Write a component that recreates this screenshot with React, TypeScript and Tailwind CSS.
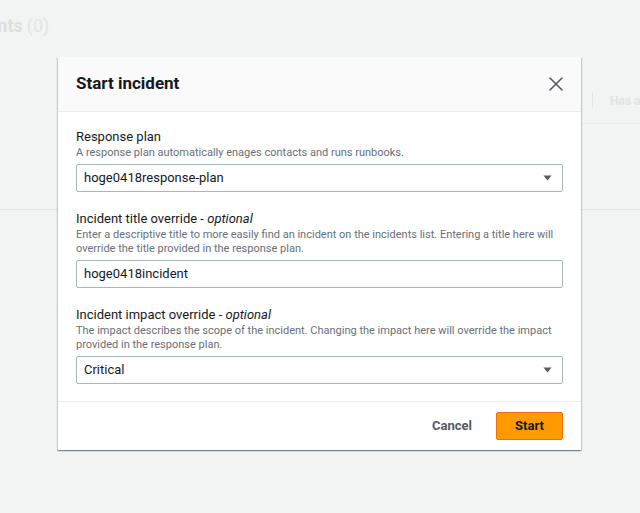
import { X } from 'lucide-react';

const font = { fontFamily: 'Roboto, "Liberation Sans", sans-serif' };

function Caret() {
  return (
    <svg width="9" height="6" viewBox="0 0 9 6" className="shrink-0">
      <path d="M0.5 0.5h8L4.5 5.5z" fill="#545b64" />
    </svg>
  );
}

function Field({
  label,
  optional,
  description,
  children,
}: {
  label: string;
  optional?: boolean;
  description: string[];
  children: React.ReactNode;
}) {
  return (
    <div className="flex flex-col">
      <div className="text-[13px] leading-[16px] text-[#16191f]">
        {label}
        {optional && (
          <>
            {' - '}
            <i>optional</i>
          </>
        )}
      </div>
      <div className="mt-[1px] text-[11px] leading-[14.5px] text-[#687078]">
        {description.map((line) => (
          <div key={line}>{line}</div>
        ))}
      </div>
      <div className="mt-[3px]">{children}</div>
    </div>
  );
}

function SelectBox({ value }: { value: string }) {
  return (
    <div className="flex h-[28px] items-center justify-between rounded-[2px] border border-[#aab7b8] bg-white pl-[7px] pr-[10px] text-[13px] text-[#16191f]">
      <span>{value}</span>
      <Caret />
    </div>
  );
}

export default function App() {
  return (
    <div className="relative h-[513px] w-[640px] overflow-hidden bg-[#f2f3f3]" style={font}>
      {/* page behind the overlay */}
      <div className="flex flex-col">
        <div className="flex h-[50px] items-center overflow-hidden">
          <span className="-ml-[52px] text-[18px] font-bold text-[#dcdfdf]">Incidents</span>
          <span className="ml-[4px] text-[18px] text-[#e3e5e5]">(0)</span>
        </div>
        <div className="flex h-[74px] justify-end">
          <div className="flex w-[120px] items-center border-b border-[#e6e8e8] pt-[28px]">
            <div className="ml-[72px] h-[17px] w-px shrink-0 bg-[#e3e5e5]" />
            <span className="ml-[17px] whitespace-nowrap text-[12px] font-bold text-[#e1e3e3]">
              Has a
            </span>
          </div>
        </div>
        <div className="h-[86px] border-b border-[#e3e5e5]" />
      </div>

      {/* modal */}
      <div className="absolute left-[58px] top-[57px] flex w-[523px] flex-col bg-white shadow-[0_1px_1px_0_rgba(0,28,36,0.3),1px_1px_1px_0_rgba(0,28,36,0.15),-1px_1px_1px_0_rgba(0,28,36,0.15)]">
        <div className="flex h-[55px] items-center justify-between border-b border-[#eaeded] bg-[#fafafa] pl-[18px] pr-[13px]">
          <h2 className="text-[17px] font-bold text-[#16191f]">Start incident</h2>
          <X size={24} strokeWidth={1.6} color="#545b64" />
        </div>
        <div className="flex flex-col gap-[19px] px-[18px] pb-[17px] pt-[17px]">
          <Field
            label="Response plan"
            description={['A response plan automatically enages contacts and runs runbooks.']}
          >
            <SelectBox value="hoge0418response-plan" />
          </Field>
          <Field
            label="Incident title override"
            optional
            description={[
              'Enter a descriptive title to more easily find an incident on the incidents list. Entering a title here will',
              'override the title provided in the response plan.',
            ]}
          >
            <div className="flex h-[28px] items-center rounded-[2px] border border-[#aab7b8] bg-white px-[7px] text-[13px] text-[#16191f]">
              hoge0418incident
            </div>
          </Field>
          <Field
            label="Incident impact override"
            optional
            description={[
              'The impact describes the scope of the incident. Changing the impact here will override the impact',
              'provided in the response plan.',
            ]}
          >
            <SelectBox value="Critical" />
          </Field>
        </div>
        <div className="flex items-center justify-end gap-[12px] border-t border-[#eaeded] pb-[10px] pl-[18px] pr-[18px] pt-[10px]">
          <button className="h-[28px] px-[12px] text-[13px] font-bold text-[#545b64]">Cancel</button>
          <button className="h-[28px] w-[67px] rounded-[2px] border border-[#ec7211] bg-[#ff9900] text-[13px] font-bold text-[#16191f]">
            Start
          </button>
        </div>
      </div>
    </div>
  );
}
